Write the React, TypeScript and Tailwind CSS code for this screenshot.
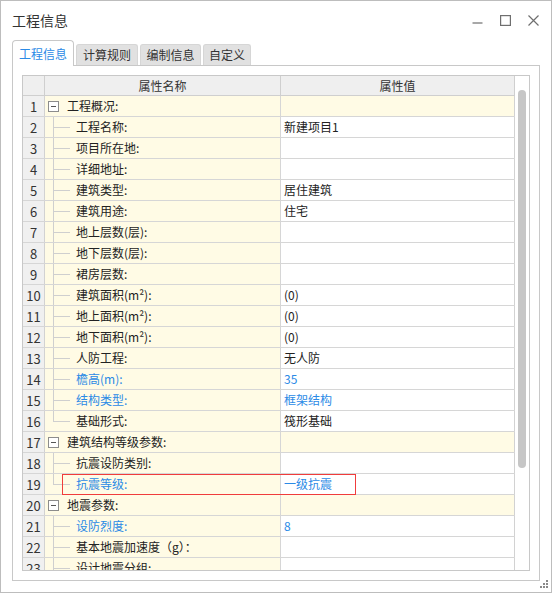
import React from "react";

type Row = { n: number; name: string; value?: string; group?: boolean; blue?: boolean; last?: boolean };

const rows: Row[] = [
  { n: 1, name: "工程概况:", group: true },
  { n: 2, name: "工程名称:", value: "新建项目1" },
  { n: 3, name: "项目所在地:" },
  { n: 4, name: "详细地址:" },
  { n: 5, name: "建筑类型:", value: "居住建筑" },
  { n: 6, name: "建筑用途:", value: "住宅" },
  { n: 7, name: "地上层数(层):" },
  { n: 8, name: "地下层数(层):" },
  { n: 9, name: "裙房层数:" },
  { n: 10, name: "建筑面积(m²):", value: "(0)" },
  { n: 11, name: "地上面积(m²):", value: "(0)" },
  { n: 12, name: "地下面积(m²):", value: "(0)" },
  { n: 13, name: "人防工程:", value: "无人防" },
  { n: 14, name: "檐高(m):", value: "35", blue: true },
  { n: 15, name: "结构类型:", value: "框架结构", blue: true },
  { n: 16, name: "基础形式:", value: "筏形基础", last: true },
  { n: 17, name: "建筑结构等级参数:", group: true },
  { n: 18, name: "抗震设防类别:" },
  { n: 19, name: "抗震等级:", value: "一级抗震", blue: true, last: true },
  { n: 20, name: "地震参数:", group: true },
  { n: 21, name: "设防烈度:", value: "8", blue: true },
  { n: 22, name: "基本地震加速度（g）：" },
  { n: 23, name: "设计地震分组:" },
];

function NameCell({ r }: { r: Row }) {
  const color = r.blue ? "text-[#2b8ae6]" : "text-[#222]";
  if (r.group) {
    return (
      <div className="relative h-full flex items-center pl-[3px]">
        <div className="w-[11px] h-[11px] border border-[#8c8c8c] bg-white flex items-center justify-center">
          <div className="w-[5px] h-px bg-[#555]" />
        </div>
        <span className={`ml-[8px] ${color}`}>{r.name}</span>
      </div>
    );
  }
  return (
    <div className="relative h-full flex items-center pl-[31px]">
      <div className={`absolute left-[8px] top-0 w-px bg-[#cfcfcf] ${r.last ? "h-[10px]" : "h-full"}`} />
      <div className="absolute left-[8px] top-[10px] w-[17px] h-px bg-[#cfcfcf]" />
      <span className={`whitespace-nowrap ${color}`}>{r.name}</span>
    </div>
  );
}

export default function App() {
  return (
    <div className="w-[552px] h-[593px] bg-white border border-[#bdbdbd] flex flex-col font-['Noto_Sans_CJK_SC',sans-serif] text-[12px] leading-none text-[#222] overflow-hidden relative">
      {/* title bar */}
      <div className="h-[39px] flex items-center pl-[11px] relative">
        <span className="text-[14px] text-[#333] -mt-[1px]">工程信息</span>
        <div className="absolute right-[12px] top-[14px] flex items-center gap-[17px]">
          <svg width="11" height="11" viewBox="0 0 11 11">
            <line x1="0.5" y1="8" x2="10.5" y2="8" stroke="#6f6f6f" strokeWidth="1.2" />
          </svg>
          <svg width="11" height="11" viewBox="0 0 11 11">
            <rect x="0.6" y="0.6" width="9.8" height="9.8" fill="none" stroke="#6f6f6f" strokeWidth="1.2" />
          </svg>
          <svg width="11" height="11" viewBox="0 0 11 11">
            <path d="M0.5 0.5 L10.5 10.5 M10.5 0.5 L0.5 10.5" stroke="#6f6f6f" strokeWidth="1.2" />
          </svg>
        </div>
      </div>

      <div className="px-[11px] flex flex-col flex-1">
        {/* tabs */}
        <div className="h-[25px] flex items-end gap-[2px]">
          <div className="w-[62px] h-[26px] -mb-px relative z-10 bg-white border border-b-0 border-[#c8c8c8] rounded-t-[4px] flex items-center justify-center text-[#2b8ae6]">
            工程信息
          </div>
          <div className="w-[62px] h-[21px] bg-[#e1e1e1] border border-b-0 border-[#d6d6d6] rounded-t-[3px] flex items-center justify-center text-[#333]">
            计算规则
          </div>
          <div className="w-[61px] h-[21px] bg-[#e1e1e1] border border-b-0 border-[#d6d6d6] rounded-t-[3px] flex items-center justify-center text-[#333]">
            编制信息
          </div>
          <div className="w-[48px] h-[21px] bg-[#e1e1e1] border border-b-0 border-[#d6d6d6] rounded-t-[3px] flex items-center justify-center text-[#333]">
            自定义
          </div>
        </div>

        {/* panel */}
        <div className="h-[516px] border border-[#c8c8c8] p-[9px]">
          <div className="h-full border border-[#c8c8c8] flex overflow-hidden">
            <div className="w-[492px] relative overflow-hidden">
              {/* header */}
              <div className="flex h-[20px] bg-[#efefef] border-b border-[#cfcfcf]">
                <div className="w-[22px] border-r border-[#cfcfcf]" />
                <div className="w-[236px] border-r border-[#cfcfcf] flex items-center justify-center text-[#333]">属性名称</div>
                <div className="w-[234px] border-r border-[#cfcfcf] flex items-center justify-center text-[#333]">属性值</div>
              </div>
              {rows.map((r) => (
                <div key={r.n} className="flex h-[21px] border-b border-[#d6d6d6]">
                  <div className="w-[22px] shrink-0 bg-[#f0f0f0] border-r border-[#d2d2d2] flex items-center justify-center text-[#333] text-[13px]">
                    {r.n}
                  </div>
                  <div className="w-[236px] shrink-0 bg-[#fffbe5] border-r border-[#d6d6d6]">
                    <NameCell r={r} />
                  </div>
                  <div
                    className={`w-[234px] shrink-0 border-r border-[#d2d2d2] flex items-center pl-[3px] ${
                      r.group ? "bg-[#fffbe5]" : "bg-white"
                    } ${r.blue ? "text-[#2b8ae6]" : "text-[#222]"}`}
                  >
                    {r.value}
                  </div>
                </div>
              ))}
              <div className="absolute left-[39px] top-[398px] w-[294px] h-[21px] border border-[#f03c3c]" />
            </div>
            {/* scrollbar */}
            <div className="flex-1 relative bg-white">
              <div className="absolute left-[3px] top-[14px] w-[8px] h-[378px] rounded-full bg-[#c6c6c6]" />
            </div>
          </div>
        </div>
      </div>

      {/* resize grip */}
      <div className="absolute right-[2px] bottom-[3px] w-[10px] h-[9px]">
        <svg width="10" height="9" viewBox="0 0 10 9">
          <rect x="7" y="0" width="2" height="2" fill="#8a8a8a" />
          <rect x="4" y="3" width="2" height="2" fill="#8a8a8a" />
          <rect x="7" y="3" width="2" height="2" fill="#8a8a8a" />
          <rect x="1" y="6" width="2" height="2" fill="#8a8a8a" />
          <rect x="4" y="6" width="2" height="2" fill="#8a8a8a" />
          <rect x="7" y="6" width="2" height="2" fill="#8a8a8a" />
        </svg>
      </div>
    </div>
  );
}
